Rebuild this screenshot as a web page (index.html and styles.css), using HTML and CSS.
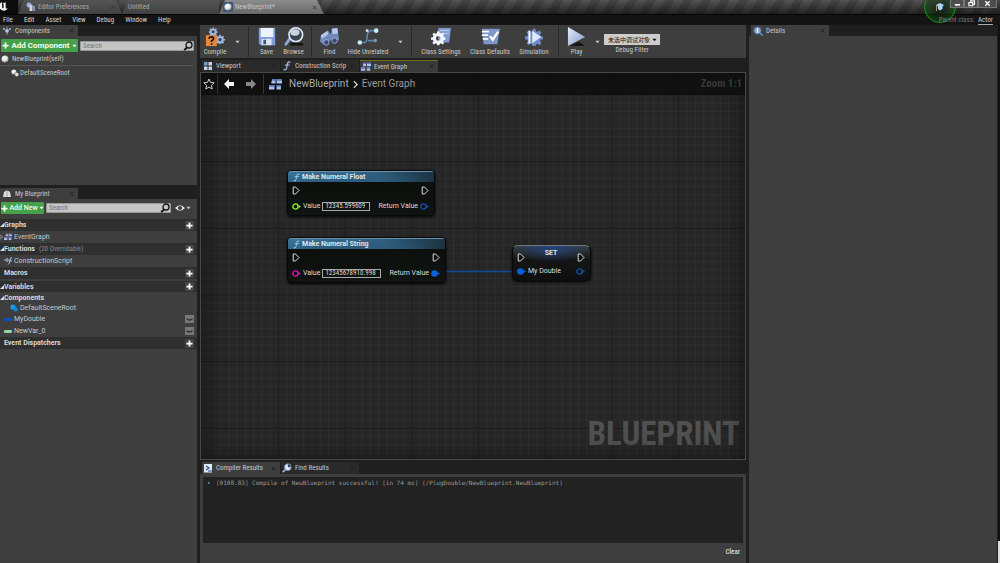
FILE: index.html
```html
<!DOCTYPE html>
<html lang="en">
<head>
<meta charset="utf-8">
<title>NewBlueprint</title>
<link rel="stylesheet" href="styles.css">
</head>
<body>
<svg class="defs" aria-hidden="true">
  <defs>
    <linearGradient id="steel" x1="0" y1="0" x2="1" y2="1"><stop offset="0" stop-color="#e8f0ff"/><stop offset="1" stop-color="#7d97c9"/></linearGradient>
    <radialGradient id="ball" cx=".4" cy=".35" r=".7"><stop offset="0" stop-color="#fff"/><stop offset=".6" stop-color="#ddd"/><stop offset="1" stop-color="#777"/></radialGradient>
    <symbol id="i-plus" viewBox="0 0 8 8"><path d="M4 .5v7M.5 4h7" stroke="currentColor" stroke-width="2" fill="none"/></symbol>
    <symbol id="i-caret" viewBox="0 0 6 4"><path d="M.5.5h5L3 3.5z" fill="currentColor"/></symbol>
    <symbol id="i-close" viewBox="0 0 6 6"><path d="M1 1l4 4M5 1L1 5" stroke="currentColor" fill="none"/></symbol>
    <symbol id="i-search" viewBox="0 0 10 10"><circle cx="6" cy="4" r="3" fill="none" stroke="#111" stroke-width="1.3"/><path d="M4 6.5L1.2 9.2" stroke="#111" stroke-width="1.8"/></symbol>
    <symbol id="i-open" viewBox="0 0 4 4"><path d="M4 0v4H0z" fill="#ddd"/></symbol>
    <symbol id="i-grid" viewBox="0 0 12 10"><path d="M3 0h3v4H2zM7 0h5v4H7zM0 5.500h5v4H0zM7 5.500h4v4H7z" fill="#a9bfee"/><path d="M0 5.500h5v1.500H0zM7 0h5v1.500H7zM7 5.500h4v1.500H7zM3 0h3v1.500H3z" fill="#5c76b8"/></symbol>
    <symbol id="i-view" viewBox="0 0 10 10"><path d="M1 1h3.500v3.500H1z" fill="#6fa3c8"/><path d="M5.500 1H9v3.500H5.500zM1 5.500h3.500V9H1zM5.500 5.500H9V9H5.500z" fill="#c4d4ee"/></symbol>
    <symbol id="i-func" viewBox="0 0 8 10"><path d="M7 1.200C4.800.2 4.500 2.200 4 5S3 9.500 1 8.800M2.300 4h3.900" fill="none" stroke="currentColor" stroke-width="1.200" stroke-linecap="round"/></symbol>
    <symbol id="i-gear" viewBox="0 0 20 20"><path d="M8.500 1h3l.5 2.600 1.700.7L16 2.900 18.100 5l-1.500 2.200.7 1.700 2.700.6v3l-2.700.5-.7 1.700 1.500 2.200-2.100 2.100-2.300-1.500-1.700.7-.5 2.500h-3l-.5-2.500-1.700-.7L4 19l-2.100-2.100 1.500-2.200-.7-1.700L0 12.500v-3l2.700-.6.7-1.700L1.900 5 4 2.900l2.300 1.400L8 3.600zM10 7.500a3.200 3.200 0 1 0 0 6.400 3.200 3.200 0 0 0 0-6.400z" fill-rule="evenodd" fill="currentColor"/></symbol>
    <symbol id="i-spheres" viewBox="0 0 10 10"><circle cx="3.700" cy="3.700" r="3.200" fill="url(#ball)"/><circle cx="7.200" cy="6.800" r="2.500" fill="#e8e8e8" stroke="#444" stroke-width=".5"/></symbol>
    <symbol id="i-exec" viewBox="0 0 8 9"><path d="M1.200 1h2.300l3.500 3.500L3.500 8H1.200z" fill="#111" stroke="#ddd" stroke-width="1" stroke-linejoin="round"/></symbol>
    <symbol id="i-pin" viewBox="0 0 9 7"><circle cx="3.500" cy="3.500" r="2.600" fill="#0c0e0c" stroke="currentColor" stroke-width="1.400"/><path d="M6.800 2L9 3.500 6.800 5z" fill="currentColor"/></symbol>
    <symbol id="i-pinfull" viewBox="0 0 9 7"><circle cx="3.500" cy="3.500" r="3.300" fill="currentColor"/><path d="M6.500 2L9 3.500 6.500 5z" fill="currentColor"/></symbol>
    <symbol id="i-eyeclosed" viewBox="0 0 9 8"><path d="M1.500 3.500q3 3 6 0" fill="none" stroke="#333" stroke-width="1.200"/></symbol>
    <symbol id="i-lens" viewBox="0 0 12 12"><circle cx="7" cy="5" r="4" fill="#e5efff" stroke="#6d7f9e"/><path d="M7 5V1.500A3.500 3.500 0 0 1 10.500 5z" fill="#28405f"/><path d="M4 8L1 11" stroke="#9fb8e8" stroke-width="2"/></symbol>
  </defs>
</svg>

<div class="app">
  <header class="titlebar">
    <div class="logo"><svg viewBox="0 0 14 14" aria-label="Logo"><path d="M0 3q1-2 3-2v7q0 2 2 1V3L4 2q3 0 4-1v8l1 1 2-1q-2 4-5 4Q2 13 0 10z" fill="#f2f2f2"/></svg></div>
    <nav class="doc-tabs">
      <div class="doc-tab"><svg class="ic10" viewBox="0 0 10 10"><circle cx="3" cy="3" r="2.500" fill="#9fb1d4"/><rect x="3.500" y="3" width="3" height="6" fill="#c9d5ee"/><rect x="7" y="4" width="2" height="5" fill="#8093bd"/></svg><span>Editor Preferences</span><svg class="close"><use href="#i-close"/></svg></div>
      <div class="doc-tab plain"><span>Untitled</span></div>
      <div class="doc-tab current"><svg class="ic10" viewBox="0 0 10 10"><rect width="10" height="10" rx="1" fill="#3c5578"/><circle cx="5" cy="5" r="3.600" fill="url(#ball)"/></svg><span>NewBlueprint*</span><svg class="close"><use href="#i-close"/></svg></div>
    </nav>
    <div class="glow"><svg viewBox="0 0 10 10" aria-hidden="true"><path d="M1 3l4-2 4 2-1.500 1.500V7L5 8.500 3 7V4.500z" fill="#a8d4f4"/><path d="M1.500 3v6" stroke="#b98c6a"/></svg></div>
    <div class="win-buttons">
      <button aria-label="Minimize"><svg viewBox="0 0 10 8"><path d="M2 5.500h6" stroke="#fff" stroke-width="2"/></svg></button>
      <button aria-label="Restore"><svg viewBox="0 0 10 8"><path d="M4 2.500V1h4.500v4H7M2 3h4.500v3.500H2z" fill="none" stroke="#fff" stroke-width="1.200"/></svg></button>
      <button aria-label="Close" class="wide"><svg viewBox="0 0 10 8"><path d="M2.500 1.500l5 5M7.500 1.500l-5 5" stroke="#fff" stroke-width="1.500"/></svg></button>
    </div>
  </header>

  <nav class="menubar">
    <button>File</button><button>Edit</button><button>Asset</button><button>View</button><button>Debug</button><button>Window</button><button>Help</button>
    <p class="parent">Parent class: <a href="#">Actor</a></p>
  </nav>

  <main class="workspace">
    <aside class="left">
      <section class="pane components">
        <div class="tabs"><div class="tab"><svg class="ic10" viewBox="0 0 10 10"><path d="M5 1v8M2 3l3 2 3-2" stroke="#7f9cc4" fill="none"/><circle cx="2" cy="3" r="1" fill="#aac"/><circle cx="8" cy="3" r="1" fill="#aac"/><circle cx="5" cy="5" r="1.800" fill="#b4c8e6"/></svg><h2>Components</h2><svg class="close"><use href="#i-close"/></svg></div></div>
        <div class="panel">
          <div class="tools">
            <button class="add big"><svg class="plus"><use href="#i-plus"/></svg>Add Component<svg class="caret"><use href="#i-caret"/></svg></button>
            <label class="search"><input type="text" placeholder="Search" aria-label="Search components"><svg class="ic10"><use href="#i-search"/></svg></label>
          </div>
          <div class="comp-row root"><svg class="ic8" viewBox="0 0 8 8"><circle cx="4" cy="4" r="3.500" fill="url(#ball)"/></svg>NewBlueprint(self)</div>
          <div class="comp-row child"><svg class="ic8"><use href="#i-spheres"/></svg>DefaultSceneRoot</div>
        </div>
      </section>

      <section class="pane blueprint">
        <div class="tabs"><div class="tab"><svg class="ic10" viewBox="0 0 10 10"><path d="M1 8l1-5q3-3 6 0l1 5z" fill="#ddd"/><path d="M5 2v6" stroke="#777" stroke-width=".6"/></svg><h2>My Blueprint</h2><svg class="close"><use href="#i-close"/></svg></div></div>
        <div class="panel">
          <div class="tools">
            <button class="add"><svg class="plus"><use href="#i-plus"/></svg>Add New<svg class="caret"><use href="#i-caret"/></svg></button>
            <label class="search"><input type="text" placeholder="Search" aria-label="Search blueprint"><svg class="ic10"><use href="#i-search"/></svg></label>
            <button class="eye" aria-label="View options"><svg class="ic10" viewBox="0 0 10 10"><path d="M0 5q5-5.500 10 0-5 5.500-10 0z" fill="#ddd"/><circle cx="5" cy="5" r="2" fill="#344"/></svg><svg class="caret"><use href="#i-caret"/></svg></button>
          </div>
          <div class="tree">
            <div class="cat"><svg class="open"><use href="#i-open"/></svg><h3>Graphs</h3><button aria-label="Add graph"><svg class="plus"><use href="#i-plus"/></svg></button></div>
            <div class="leaf"><svg class="expander" viewBox="0 0 4 6"><path d="M0 1l3 2-3 2z" fill="none" stroke="#999" stroke-width=".8"/></svg><svg class="ic8"><use href="#i-grid"/></svg>EventGraph</div>
            <div class="cat"><svg class="open"><use href="#i-open"/></svg><h3>Functions</h3><small>(20 Overridable)</small><button aria-label="Add function"><svg class="plus"><use href="#i-plus"/></svg></button></div>
            <div class="leaf"><svg class="ic8" viewBox="0 0 8 8"><path d="M0 3h4M2.500 1l2 2-2 2M8 1Q6 0 6 3T4 7.500M5 4h3" stroke="#b6c7e6" fill="none"/></svg>ConstructionScript</div>
            <div class="cat"><h3>Macros</h3><button aria-label="Add macro"><svg class="plus"><use href="#i-plus"/></svg></button></div>
            <div class="cat gap"><svg class="open"><use href="#i-open"/></svg><h3>Variables</h3><button aria-label="Add variable"><svg class="plus"><use href="#i-plus"/></svg></button></div>
            <div class="cat sub"><svg class="open"><use href="#i-open"/></svg><h3>Components</h3></div>
            <div class="leaf short deep"><svg class="ic8" viewBox="0 0 8 8"><circle cx="3" cy="3" r="2.600" fill="#189de8"/><circle cx="5.500" cy="5.200" r="2.300" fill="#0e86d0"/></svg>DefaultSceneRoot</div>
            <div class="leaf"><i class="pill blue"></i>MyDouble<button class="vis" aria-label="Toggle MyDouble"><svg><use href="#i-eyeclosed"/></svg></button></div>
            <div class="leaf"><i class="pill green"></i>NewVar_0<button class="vis" aria-label="Toggle NewVar_0"><svg><use href="#i-eyeclosed"/></svg></button></div>
            <div class="cat"><h3>Event Dispatchers</h3><button aria-label="Add dispatcher"><svg class="plus"><use href="#i-plus"/></svg></button></div>
          </div>
        </div>
      </section>
    </aside>

    <div class="center">
      <div class="toolbar">
        <button class="tool w30"><svg viewBox="0 0 24 22"><g color="#9db4e0"><use href="#i-gear" x="5" y="0" width="10" height="10"/><use href="#i-gear" x="12" y="8" width="11" height="11"/></g><rect x="2" y="9" width="12" height="12" fill="#e9883a"/><path d="M5.500 13q0-2.200 2.500-2.200t2.500 2q0 1.200-2.300 2.400v1.300M8.200 18v1.600" stroke="#111" stroke-width="1.800" fill="none"/></svg>Compile</button>
        <button class="more" aria-label="Compile options"><svg class="caret"><use href="#i-caret"/></svg></button>
        <hr>
        <button class="tool w27"><svg viewBox="0 0 24 22"><path d="M3 1h18v19H5l-2-2z" fill="#7f9cdb"/><path d="M5 1h14v10H5z" fill="#eef3fb"/><path d="M6 13h11v7H6z" fill="#dfe5ef"/><path d="M8 14h3v5H8z" fill="#3f557f"/></svg>Save</button>
        <button class="tool w27"><svg viewBox="0 0 24 22"><path d="M8 12L3 19" stroke="#8ea9dc" stroke-width="3" stroke-linecap="round"/><path d="M8 19h14" stroke="#151515" stroke-width="3"/><circle cx="14" cy="8.500" r="7.500" fill="#39424e" stroke="#dce6f5" stroke-width="1.800"/><ellipse cx="13" cy="6" rx="5" ry="3.500" fill="#c9d3df"/></svg>Browse</button>
        <hr>
        <button class="tool w27"><svg viewBox="0 0 24 22"><path d="M2 9l8-5 3 4 1-6 6-1 2 13-5 3-3-3-4 2-4 4-5-4z" fill="#7189bd"/><path d="M2 9l7-5 1 4-7 5zM14 2l6-1 1 6-6 1z" fill="#b8caec"/><circle cx="8" cy="17" r="3" fill="#394a70" stroke="#9eb4e0"/><circle cx="17" cy="15" r="3" fill="#394a70" stroke="#9eb4e0"/></svg>Find</button>
        <button class="tool w50"><svg viewBox="0 0 24 22"><path d="M4 17h4q3 0 3-6t4-7h5M12 15h7" fill="none" stroke="#5f82a8" stroke-width="1.800"/><g fill="#cbe9f8"><circle cx="3" cy="17" r="2.500"/><circle cx="21" cy="4" r="2.500"/><circle cx="11" cy="4" r="1.600"/></g><circle cx="20" cy="15" r="2" fill="#6f93b5"/></svg>Hide Unrelated</button>
        <button class="more" aria-label="Hide options"><svg class="caret"><use href="#i-caret"/></svg></button>
        <hr>
        <button class="tool w50"><svg viewBox="0 0 24 22"><path d="M9 1h14l-2 16H9z" fill="#7f9bd3"/><path d="M11 4h10M11 7h10" stroke="#c2d2f1"/><g color="#f3f6fa"><use href="#i-gear" x="1" y="4" width="16" height="16"/></g></svg>Class Settings</button>
        <button class="tool w48"><svg viewBox="0 0 24 22"><path d="M3 2h20l-3 17H5z" fill="#7d97c9"/><path d="M3 5h8M3 9h7M4 13h6" stroke="#fff" stroke-width="2"/><path d="M12 10l3 4 6-9" fill="none" stroke="#fff" stroke-width="2.500"/></svg>Class Defaults</button>
        <button class="tool w40"><svg viewBox="0 0 24 22"><g color="#6e8ccb"><use href="#i-gear" x="2" y="1" width="20" height="20"/></g><circle cx="12" cy="11" r="5" fill="#6e8ccb"/><path d="M10 4l10 7-10 7z" fill="#dce8fb"/><path d="M7 4v14" stroke="#fff" stroke-width="2"/></svg>Simulation</button>
        <hr>
        <button class="tool w27"><svg viewBox="0 0 24 22"><path d="M4 21h17l-7-5z" fill="#171717"/><path d="M2 0l19 11L2 21z" fill="url(#steel)"/></svg>Play</button>
        <button class="more" aria-label="Play options"><svg class="caret"><use href="#i-caret"/></svg></button>
        <div class="debug">
          <div class="select"><select id="debug-filter"><option>未选中调试对象</option></select><svg class="caret"><use href="#i-caret"/></svg></div>
          <label for="debug-filter">Debug Filter</label>
        </div>
      </div>

      <div class="tabs graph-tabs">
        <div class="tab idle"><svg class="ic10"><use href="#i-view"/></svg><h2>Viewport</h2><svg class="close"><use href="#i-close"/></svg></div>
        <div class="tab idle"><svg class="ic10 fn"><use href="#i-func"/></svg><h2>Construction Scrip</h2><svg class="close"><use href="#i-close"/></svg></div>
        <div class="tab accent"><svg class="ic10"><use href="#i-grid"/></svg><h2>Event Graph</h2><svg class="close"><use href="#i-close"/></svg></div>
      </div>

      <section class="graph">
        <svg class="gridlines" aria-hidden="true">
          <defs>
            <pattern id="minor" width="8.333" height="8.333" patternUnits="userSpaceOnUse" x="10.500" y="21.500"><path d="M.5 0v8.333M0 .5h8.333" stroke="#2e2e2e"/></pattern>
            <pattern id="major" width="66.667" height="66.667" patternUnits="userSpaceOnUse" x="10.500" y="21.500"><path d="M.5 0v66.667M0 .5h66.667" stroke="#1a1a1a"/></pattern>
          </defs>
          <rect width="100%" height="100%" fill="url(#minor)"/><rect width="100%" height="100%" fill="url(#major)"/>
        </svg>
        <div class="crumbs">
          <button aria-label="Favorite"><svg viewBox="0 0 12 12"><path d="M6 1l1.500 3.400 3.700.4-2.800 2.500.8 3.700L6 9.100 2.800 11l.8-3.700L.8 4.800l3.700-.4z" fill="none" stroke="#ccc"/></svg></button>
          <hr>
          <button aria-label="Back"><svg viewBox="0 0 12 12"><path d="M1 6l5-5v3h5v4H6v3z" fill="#f0f4f4"/></svg></button>
          <button aria-label="Forward"><svg viewBox="0 0 12 12"><path d="M11 6L6 1v3H1v4h5v3z" fill="#888"/></svg></button>
          <hr>
          <svg class="crumb-icon" viewBox="0 0 12 10"><use href="#i-grid"/></svg>
          <a href="#">NewBlueprint</a>
          <svg class="chev" viewBox="0 0 6 10"><path d="M1 1l4 4-4 4" fill="none" stroke="#ddd" stroke-width="1.500"/></svg>
          <span>Event Graph</span>
          <strong class="zoom">Zoom 1:1</strong>
        </div>
        <div class="canvas">
          <svg class="wire" aria-hidden="true"><path d="M237 176.500H320" stroke="#134a94" stroke-width="1.500"/></svg>
          <article class="node float">
            <h4><svg><use href="#i-func"/></svg>Make Numeral Float</h4>
            <div class="pins"><svg class="exec"><use href="#i-exec"/></svg><svg class="exec"><use href="#i-exec"/></svg></div>
            <div class="pins"><label><svg class="pin lime"><use href="#i-pin"/></svg>Value<input type="text" value="12345.599609"></label><span>Return Value<svg class="pin azure"><use href="#i-pin"/></svg></span></div>
          </article>
          <article class="node string">
            <h4><svg><use href="#i-func"/></svg>Make Numeral String</h4>
            <div class="pins"><svg class="exec"><use href="#i-exec"/></svg><svg class="exec"><use href="#i-exec"/></svg></div>
            <div class="pins"><label><svg class="pin magenta"><use href="#i-pin"/></svg>Value<input type="text" class="long" value="12345678910.998"></label><span>Return Value<svg class="pin bright"><use href="#i-pinfull"/></svg></span></div>
          </article>
          <article class="node set">
            <div class="pins"><svg class="exec"><use href="#i-exec"/></svg><h4>SET</h4><svg class="exec"><use href="#i-exec"/></svg></div>
            <div class="pins"><span><svg class="pin bright"><use href="#i-pinfull"/></svg>My Double</span><svg class="pin azure"><use href="#i-pin"/></svg></div>
          </article>
        </div>
        <strong class="watermark">BLUEPRINT</strong>
      </section>

      <section class="results">
        <div class="tabs">
          <div class="tab"><svg class="ic10" viewBox="0 0 10 10"><rect x="1" y="1" width="8" height="8.500" fill="#dfe9f8"/><path d="M3 3l3 2-3 2M5 8h4" stroke="#274c8a" stroke-width="1.200" fill="none"/></svg><h2>Compiler Results</h2><svg class="close"><use href="#i-close"/></svg></div>
          <div class="tab idle"><svg class="ic10"><use href="#i-lens"/></svg><h2>Find Results</h2><svg class="close"><use href="#i-close"/></svg></div>
        </div>
        <div class="panel log">
          <ul><li>[0108.83] Compile of NewBlueprint successful! [in 74 ms] (/PlugDouble/NewBlueprint.NewBlueprint)</li></ul>
          <button>Clear</button>
        </div>
      </section>
    </div>

    <aside class="right pane">
      <div class="tabs"><div class="tab details"><svg class="ic10" viewBox="0 0 10 10"><circle cx="4.500" cy="4.500" r="3.800" fill="#8ba3c8" stroke="#3b5c98"/><path d="M4.500 2v5" stroke="#eee" stroke-width="1.500"/><path d="M7 7l2.500 2.500" stroke="#6b8fd8" stroke-width="1.500"/></svg><h2>Details</h2><svg class="close"><use href="#i-close"/></svg></div></div>
      <div class="panel"></div>
    </aside>
    <div class="edge"></div>
  </main>
</div>
</body>
</html>
```
FILE: styles.css
```css
* { box-sizing: border-box; }
body {
  margin: 0;
  background: #1f1f1f;
  color: #c8c8c8;
  font: 7px/10px "Roboto Condensed", Roboto, "Noto Sans CJK SC", sans-serif;
}
button, input, select { font: inherit; color: inherit; border: 0; padding: 0; margin: 0; background: none; }
h2, h3, h4, p, ul, hr { margin: 0; padding: 0; font: inherit; }
a { color: inherit; text-decoration: none; }
svg { display: block; flex: none; }
.defs { position: absolute; width: 0; height: 0; }
.ic10 { width: 10px; height: 10px; }
.ic8 { width: 8px; height: 8px; }
.plus { width: 7px; height: 7px; }
.caret { width: 5px; height: 4px; }
.close { width: 5px; height: 5px; color: #1c1c1c; margin-left: auto; }

.app { display: grid; grid-template-rows: 14px 11px 1fr; height: 100vh; overflow: hidden; }

/* Title bar */
.titlebar {
  display: flex;
  position: relative;
  background:
    repeating-linear-gradient(120deg, rgba(0,0,0,.16) 0 8px, transparent 8px 16px),
    linear-gradient(#545454, #222);
}
.logo { width: 18px; background: #0c0c0c; }
.logo svg { width: 10px; height: 13px; }
.doc-tabs { display: flex; flex: 1; }
.doc-tab {
  display: flex;
  align-items: center;
  gap: 2px;
  width: 104px;
  padding: 0 7px 0 8px;
  color: #a8a8a8;
  background: linear-gradient(#555, #414141);
  clip-path: polygon(6px 0, 98px 0, 100% 100%, 0 100%);
}
.doc-tab.plain { width: 97px; padding-left: 6px; }
.doc-tab.current { color: #c4c4c4; background: linear-gradient(#8c8c8c, #686868); width: 105px; padding-left: 4px; }
.doc-tab .close { color: #333; }
.glow {
  position: absolute;
  top: -9px;
  right: 44px;
  z-index: 2;
  width: 32px;
  height: 32px;
  padding: 10px;
  border: 1px solid #1f8a1f;
  border-radius: 50%;
  background: radial-gradient(rgba(10,40,10,.5) 30%, rgba(20,130,20,.5));
  pointer-events: none;
}
.win-buttons { display: flex; position: relative; z-index: 3; align-self: flex-start; margin-right: 3px; }
.win-buttons button { width: 14px; height: 8px; background: #4d4d4d; border: 1px solid #777; border-top: 0; display: grid; place-items: center; }
.win-buttons .wide { width: 19px; }
.win-buttons svg { width: 9px; height: 7px; }

/* Menu bar */
.menubar { display: flex; align-items: center; padding: 0 7px 0 3px; gap: 11px; background: #141414; border-top: 1px solid #050505; color: #d4d4d4; }
.parent { position: relative; z-index: 3; margin-left: auto; color: #777; }
.parent a { color: #ccc; border-bottom: 1px solid #aaa; margin-left: 2px; }

/* Docking layout */
.workspace { display: grid; grid-template-columns: 197px 1fr 248px 3px; min-height: 0; }
.edge { background: linear-gradient(90deg, #1f1f1f 1px, transparent 1px), linear-gradient(#111 0 96%, #ddd 96%); }
.left { display: grid; grid-template-rows: 160px 1fr; gap: 3px; }
.pane { display: flex; flex-direction: column; min-height: 0; }
.panel { flex: 1; background: #3e3e3e; }
.tabs { display: flex; height: 11px; gap: 2px; }
.tab { display: flex; align-items: center; gap: 3px; width: 78px; padding: 0 4px 0 1px; background: #3e3e3e; }
.tab.idle { background: #2a2a2a; }
.tab h2 { white-space: nowrap; }
.left .tab { padding-left: 2px; }
.details { padding-left: 2px; margin-left: 2px; }

.tools { display: flex; align-items: center; padding: 3px 3px 0 1px; gap: 2px; }
.add { display: flex; flex: none; align-items: center; justify-content: center; gap: 1px; width: 43px; height: 12px; background: #45a049; color: #f0fff0; font-family: Roboto, sans-serif; font-weight: 500; white-space: nowrap; border-radius: 1px; }
.add.big { width: 77px; height: 13px; font-size: 8px; font-weight: 700; gap: 2px; }
.search { display: flex; align-items: center; flex: 1; height: 10px; background: #c4c4c4; border: 1px solid #999; border-radius: 1px; }
.search input { flex: 1; min-width: 0; padding: 0 2px; height: 8px; line-height: 8px; outline: none; color: #222; }
.search input::placeholder { color: #777; opacity: 1; }
.eye { display: flex; align-items: center; gap: 1px; margin: 0 3px 0 2px; }

.comp-row { display: flex; align-items: center; gap: 3px; height: 14px; }
.comp-row.root { padding-left: 1px; margin-right: 4px; border-bottom: 1px solid #565656; }
.comp-row.child { padding-left: 11px; gap: 1px; }

.tree { padding-top: 5px; font-family: Roboto, sans-serif; }
.cat, .leaf { display: flex; align-items: center; height: 12px; padding-right: 3px; }
.cat { background: #2f2f2f; font-weight: 700; color: #d8d8d8; }
.cat h3 { margin-left: 4px; }
.open { width: 4px; height: 4px; }
.open + h3 { margin-left: 0; }
.cat small { font-size: 7px; font-family: "Roboto Condensed", Roboto, sans-serif; font-weight: 400; color: #888; margin-left: 4px; }
.cat button { margin-left: auto; background: #444; padding: 1px; color: #fff; }
.cat.gap { margin-top: 2px; height: 11px; margin-bottom: 1px; }
.cat.sub { background: none; height: 10px; }
.leaf { gap: 2px; padding-left: 4px; }
.leaf .expander { width: 4px; height: 6px; margin-left: -4px; margin-right: -2px; }
.leaf.short { height: 10px; }
.leaf.deep { padding-left: 10px; }
.pill { width: 8px; height: 3px; border-radius: 1px; }
.pill.blue { background: #0a4fc0; }
.pill.green { background: #8fd6a0; }
.vis { margin-left: auto; background: #777; }
.vis svg { width: 9px; height: 8px; }

/* Center */
.center { display: grid; grid-template-rows: 33px 14px 1fr 103px; margin: 0 3px; min-width: 0; min-height: 0; }
.toolbar { display: flex; background: #3e3e3e; }
.tool { display: flex; flex-direction: column; align-items: center; white-space: nowrap; color: #c8c8c8; padding-top: 2px; }
.tool svg { width: 22px; height: 20px; }
.toolbar .w27 { width: 27px; }
.toolbar .w30 { width: 30px; }
.toolbar .w40 { width: 40px; }
.toolbar .w48 { width: 48px; }
.toolbar .w50 { width: 50px; }
.more { width: 14px; display: grid; place-items: center; }
.toolbar hr { width: 1px; margin: 1px 4px; border: 0; background: #292929; }
.debug { display: flex; flex-direction: column; align-items: center; padding-top: 9px; }
.select { display: flex; align-items: center; width: 56px; height: 11px; padding: 0 3px 0 4px; background: #ccc; color: #111; }
.select select { appearance: none; flex: 1; min-width: 0; height: 11px; font-size: 6px; line-height: 11px; }

.graph-tabs { height: 14px; padding: 2px 0 0 2px; gap: 1px; }
.graph-tabs .tab.accent { border-top: 1px solid #6f6a1c; background: #3a3a3a; }
.fn { color: #a9bfee; }

.graph { position: relative; display: flex; flex-direction: column; background: #262626; border: 1px solid #484848; overflow: hidden; }
.gridlines { position: absolute; inset: 0; width: 100%; height: 100%; }
.graph::after { content: ""; position: absolute; inset: 0; box-shadow: inset 0 0 22px rgba(0,0,0,.5); pointer-events: none; }
.crumbs { position: relative; z-index: 1; display: flex; align-items: center; height: 22px; padding: 0 3px 0 2px; background: rgba(12,12,12,.82); font: 10px/12px Roboto, sans-serif; color: #999; }
.crumbs button { width: 12px; margin-right: 2px; }
.crumbs button svg { width: 12px; height: 12px; }
.crumbs button + button { margin: 0 6px 0 8px; }
.crumbs hr { border: 0; width: 1px; height: 20px; background: #333; margin: 0 5px 0 0; }
.crumb-icon { width: 13px; height: 11px; }
.crumbs a { margin-left: 7px; color: #aaa; }
.chev { width: 5px; height: 9px; margin: 0 4px; }
.zoom { margin-left: auto; font-family: "Roboto Condensed", Roboto, sans-serif; font-size: 11px; color: #383838; }
.canvas { position: relative; flex: 1; }
.wire { position: absolute; inset: 0; width: 100%; height: 100%; }
.watermark { position: absolute; right: 5px; bottom: 5px; font: 700 33px/40px "Roboto Condensed", Roboto, sans-serif; color: #505050; }

/* Nodes on the graph canvas */
.node { position: absolute; padding-bottom: 2px; border: 1px solid #080808; border-radius: 4px; background: linear-gradient(rgba(8,12,9,.92), rgba(14,18,15,.92)); box-shadow: 0 1px 3px #000; color: #ddd; font-family: Roboto, sans-serif; overflow: hidden; }
.node.float { left: 86px; top: 75px; width: 148px; }
.node.string { left: 86px; top: 142px; width: 159px; }
.node.set { left: 311px; top: 150px; width: 79px; padding-top: 4px; background: radial-gradient(40px 16px at 50% 0, #1e4280, transparent), linear-gradient(#3b3f3e, #141616 40%, #0d100e); border-top-color: #777; border-radius: 6px; }
.node h4 { display: flex; align-items: center; gap: 2px; height: 11px; padding-left: 5px; font-weight: 700; color: #e4e4e4; }
.node > h4 { background: radial-gradient(100px 12px at 30% 100%, #2b5a7a, transparent), linear-gradient(90deg, #40789c, #2f5f80 60%, #1c3340); border-top: 1px solid #6893ab; }
.node h4 svg { width: 7px; height: 9px; color: #7cc4ee; }
.node.set h4 { padding: 0; align-self: flex-start; line-height: 6px; height: 6px; }
.pins { display: flex; justify-content: space-between; align-items: center; height: 14px; padding: 0 5px 0 4px; }
.node > h4 + .pins { height: 17px; }
.pins label, .pins span { display: flex; align-items: center; gap: 2px; white-space: nowrap; }
.pins input { width: 48px; height: 9px; padding: 0 2px; border: 1px solid #aaa; outline: none; font-family: "Roboto Condensed", Roboto, sans-serif; line-height: 7px; }
.pins input.long { width: 59px; }
.exec { width: 8px; height: 9px; }
.pin { width: 9px; height: 7px; }
.lime { color: #8cf02c; }
.magenta { color: #e010c0; }
.azure { color: #0c52b4; }
.bright { color: #0a60d8; }

/* Results */
.results { display: flex; flex-direction: column; min-height: 0; }
.results .tabs { height: 14px; padding: 2px 0 0 2px; gap: 1px; }
.log { display: flex; flex-direction: column; padding: 3px; }
.log ul { flex: 1; list-style: none; background: #222; font: 6px/10px "DejaVu Sans Mono", monospace; color: #999; padding: 1px 4px; }
.log li::before { content: "•"; display: inline-block; width: 9px; color: #5fb0e0; }
.log button { align-self: flex-end; height: 17px; padding-right: 3px; color: #ddd; font-weight: 500; }
```
